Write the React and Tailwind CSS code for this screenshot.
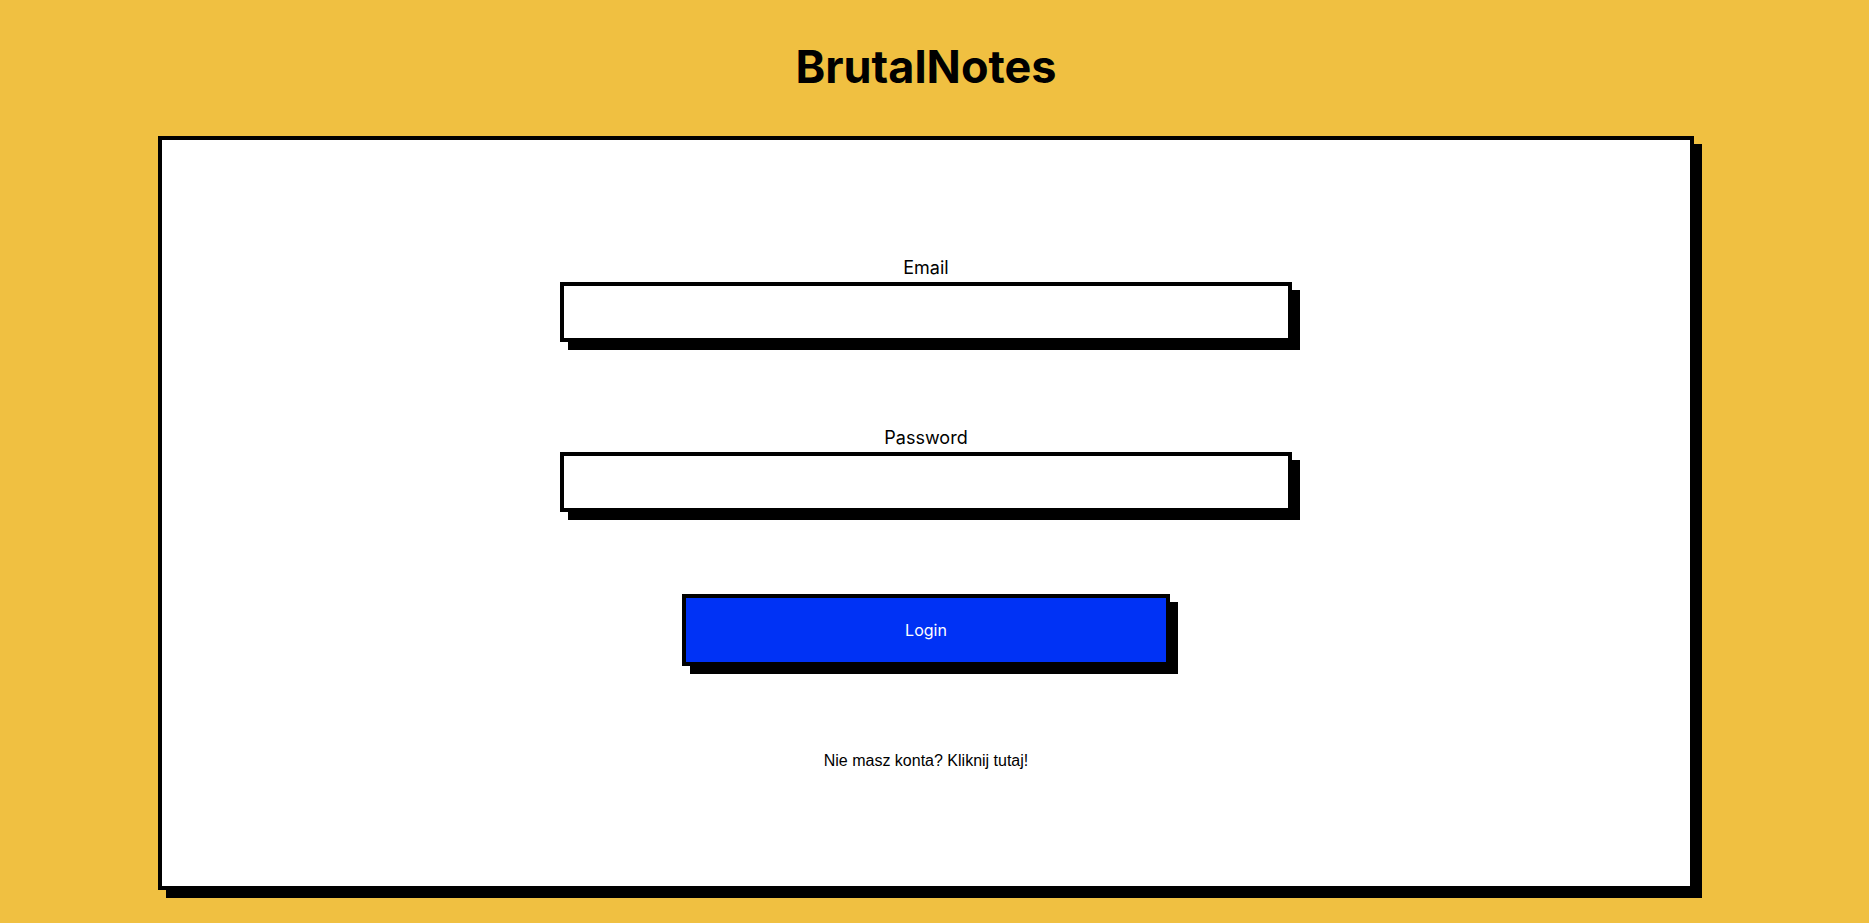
export default function App() {
  return (
    <div className="min-h-screen w-full bg-[#f0c041] font-['Inter',sans-serif] text-black">
      <div className="w-[1852px] flex flex-col items-center pb-[25px]">
        <h1 className="mt-[44px] text-[45px] leading-none font-bold">BrutalNotes</h1>

        <div className="mt-[47px] w-[1536px] h-[754px] border-4 border-black bg-white shadow-[8px_8px_0_0_#000] flex flex-col items-center pt-[114px]">
          <form className="flex flex-col items-center" onSubmit={(e) => e.preventDefault()}>
            <div className="flex flex-col items-center">
              <label htmlFor="email" className="text-lg leading-7">Email</label>
              <input
                id="email"
                type="email"
                className="w-[732px] h-[60px] border-4 border-black bg-white shadow-[8px_8px_0_0_#000] px-3 outline-none"
              />
            </div>

            <div className="flex flex-col items-center mt-[82px]">
              <label htmlFor="password" className="text-lg leading-7">Password</label>
              <input
                id="password"
                type="password"
                className="w-[732px] h-[60px] border-4 border-black bg-white shadow-[8px_8px_0_0_#000] px-3 outline-none"
              />
            </div>

            <button
              type="submit"
              className="mt-[82px] w-[488px] h-[72px] border-4 border-black bg-[#0032f5] text-white text-base shadow-[8px_8px_0_0_#000]"
            >
              Login
            </button>
          </form>

          <p className="mt-[83px] text-base leading-6 font-['Liberation_Sans',Arial,sans-serif]">
            Nie masz konta? Kliknij tutaj!
          </p>
        </div>
      </div>
    </div>
  );
}
